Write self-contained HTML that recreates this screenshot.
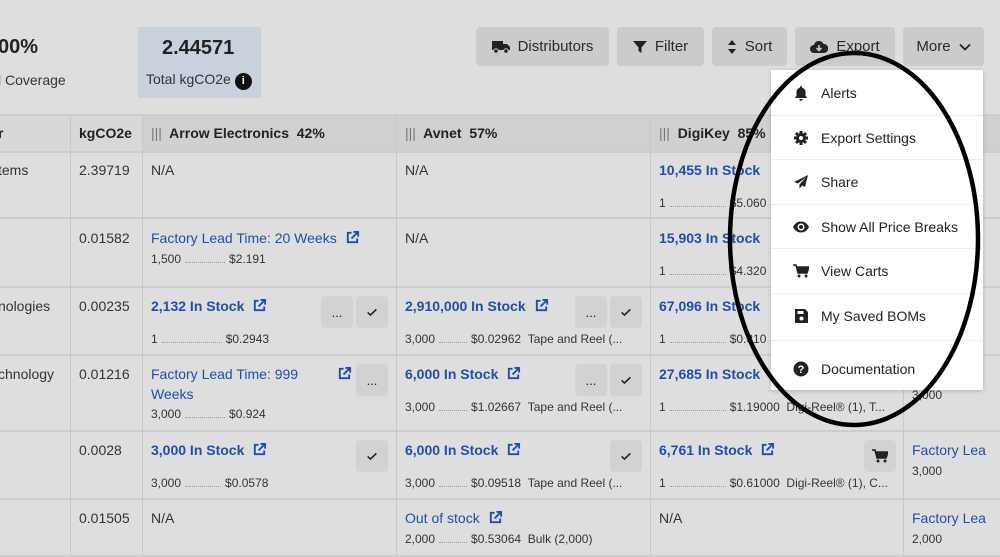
<!DOCTYPE html>
<html><head><meta charset="utf-8"><style>
*{box-sizing:border-box;margin:0;padding:0}
body{width:1000px;height:557px;overflow:hidden;background:#dedede;font-family:"Liberation Sans",sans-serif;color:#222;position:relative}
.a{position:absolute;white-space:nowrap}
.btn{position:absolute;top:27px;height:39px;background:#cbcbcb;border-radius:4px;font-size:15px;color:#2a2a2a;display:flex;align-items:center;justify-content:center;gap:8px}
.vl{position:absolute;width:1px;background:#c8c8c8;top:114px;height:443px}
.hl{position:absolute;left:0;height:2px;background:#cdcdcd;width:1000px}
.t{font-size:14px;color:#333}
.b{font-size:14px;color:#1f4fa8;font-weight:bold}
.l{font-size:14px;color:#1f4fa8}
.s{font-size:12px;color:#333}
.dots{display:inline-block;border-bottom:1px dotted #999;width:48px;margin:0 4px}
.sq{position:absolute;width:32px;height:32px;background:#d2d2d2;border-radius:4px;font-size:13px;display:flex;align-items:center;justify-content:center;color:#222}
.mi{position:absolute;left:793px;font-size:14px;color:#222;display:flex;align-items:center;gap:12px}
.mi svg{width:16px;height:16px}
.sep{position:absolute;left:771px;width:212px;height:1px;background:#eee}
.ext{display:inline-block;vertical-align:-2px;margin-left:4px}
</style></head><body>
<svg width="0" height="0" style="position:absolute"><defs>
<symbol id="ext" viewBox="0 0 16 16"><path d="M7 3H3v10h10V9" fill="none" stroke="#1f4fa8" stroke-width="2"/><path d="M9 2h5v5M14 2L7 9" fill="none" stroke="#1f4fa8" stroke-width="2"/></symbol>
<symbol id="chk" viewBox="0 0 16 16"><path d="M3 8.5l3.2 3L13 5" fill="none" stroke="#222" stroke-width="1.8"/></symbol>
</defs></svg>

<div class="a" style="left:-2px;top:36px;font-size:20px;font-weight:bold">00%</div>
<div class="a t" style="left:-2px;top:72px">l Coverage</div>
<div class="a" style="left:138px;top:27px;width:123px;height:71px;background:#c9d2dc"></div>
<div class="a" style="left:162px;top:37px;font-size:20px;font-weight:bold">2.44571</div>
<div class="a t" style="left:146px;top:71px">Total kgCO2e <span style="display:inline-block;width:17px;height:17px;border-radius:50%;background:#111;color:#fff;font-size:11px;text-align:center;line-height:17px;font-weight:bold">i</span></div>

<div class="btn" style="left:476px;width:133px"><svg width="18" height="14" viewBox="0 0 18 14"><rect x="0" y="1" width="11" height="9" fill="#222"/><path d="M11 4h4l3 3v3h-7z" fill="#222"/><circle cx="4" cy="11" r="2.3" fill="#222" stroke="#cbcbcb" stroke-width="1"/><circle cx="14" cy="11" r="2.3" fill="#222" stroke="#cbcbcb" stroke-width="1"/></svg>Distributors</div>
<div class="btn" style="left:617px;width:87px"><svg width="14" height="14" viewBox="0 0 14 14"><path d="M0 1h14L8.5 7.5V13L5.5 11V7.5z" fill="#222"/></svg>Filter</div>
<div class="btn" style="left:712px;width:75px"><svg width="10" height="16" viewBox="0 0 10 16"><path d="M5 1l4 5H1zM5 15l4-5H1z" fill="#222"/></svg>Sort</div>
<div class="btn" style="left:795px;width:100px"><svg width="18" height="14" viewBox="0 0 18 14"><path d="M4 13a4 4 0 010-8 5 5 0 019.5-1A4.5 4.5 0 0114 13z" fill="#222"/><path d="M9 5v5M6.5 8L9 10.5 11.5 8" fill="none" stroke="#cbcbcb" stroke-width="1.6"/></svg>Export</div>
<div class="btn" style="left:903px;width:81px">More <svg width="12" height="8" viewBox="0 0 12 8"><path d="M1 1.5l5 5 5-5" fill="none" stroke="#222" stroke-width="1.8"/></svg></div>

<div class="a" style="left:0;top:114px;width:1000px;height:37px;background:#d0d0d0"></div>
<div class="a" style="left:0;top:114px;width:142px;height:37px;background:#d8d8d8"></div>
<div class="hl" style="top:114px"></div><div class="hl" style="top:151px"></div>
<div class="hl" style="top:217px"></div><div class="hl" style="top:286px"></div>
<div class="hl" style="top:354px"></div><div class="hl" style="top:430px"></div>
<div class="hl" style="top:498px"></div><div class="hl" style="top:555px"></div>
<div class="vl" style="left:70px"></div><div class="vl" style="left:142px"></div>
<div class="vl" style="left:396px"></div><div class="vl" style="left:650px"></div>
<div class="vl" style="left:903px;top:380px;height:177px"></div>

<div class="a" style="left:-2px;top:125px;font-size:14px;font-weight:bold">r</div>
<div class="a" style="left:79px;top:125px;font-size:14px;font-weight:bold">kgCO2e</div>
<div class="a" style="left:151px;top:125px;font-size:14px;font-weight:bold"><span style="color:#777;font-weight:normal">|||</span>&nbsp; Arrow Electronics &nbsp;42%</div>
<div class="a" style="left:405px;top:125px;font-size:14px;font-weight:bold"><span style="color:#777;font-weight:normal">|||</span>&nbsp; Avnet &nbsp;57%</div>
<div class="a" style="left:659px;top:125px;font-size:14px;font-weight:bold"><span style="color:#777;font-weight:normal">|||</span>&nbsp; DigiKey &nbsp;85%</div>

<div class="a t" style="left:-2px;top:162px">tems</div>
<div class="a t" style="left:-2px;top:298px">nologies</div>
<div class="a t" style="left:-2px;top:366px">chnology</div>
<div class="a t" style="left:79px;top:162px">2.39719</div>
<div class="a t" style="left:79px;top:230px">0.01582</div>
<div class="a t" style="left:79px;top:298px">0.00235</div>
<div class="a t" style="left:79px;top:366px">0.01216</div>
<div class="a t" style="left:79px;top:442px">0.0028</div>
<div class="a t" style="left:79px;top:510px">0.01505</div>

<div class="a t" style="left:151px;top:162px">N/A</div>
<div class="a t" style="left:405px;top:162px">N/A</div>
<div class="a t" style="left:405px;top:230px">N/A</div>
<div class="a t" style="left:151px;top:510px">N/A</div>
<div class="a t" style="left:659px;top:510px">N/A</div>

<div class="a l" style="left:151px;top:230px">Factory Lead Time: 20 Weeks <svg class="ext" width="15" height="15"><use href="#ext"/></svg></div>
<div class="a s" style="left:151px;top:252px">1,500<span class="dots" style="width:40px"></span>$2.191</div>
<div class="a b" style="left:151px;top:298px">2,132 In Stock <svg class="ext" width="15" height="15"><use href="#ext"/></svg></div>
<div class="a s" style="left:151px;top:332px">1<span class="dots" style="width:60px"></span>$0.2943</div>
<div class="sq" style="left:321px;top:296px">...</div><div class="sq" style="left:356px;top:296px"><svg width="14" height="14"><use href="#chk"/></svg></div>
<div class="a l" style="left:151px;top:366px">Factory Lead Time: 999</div>
<div class="a l" style="left:151px;top:386px">Weeks</div>
<div class="a" style="left:337px;top:366px"><svg width="15" height="15"><use href="#ext"/></svg></div>
<div class="a s" style="left:151px;top:407px">3,000<span class="dots" style="width:40px"></span>$0.924</div>
<div class="sq" style="left:356px;top:364px">...</div>
<div class="a b" style="left:151px;top:442px">3,000 In Stock <svg class="ext" width="15" height="15"><use href="#ext"/></svg></div>
<div class="a s" style="left:151px;top:476px">3,000<span class="dots" style="width:36px"></span>$0.0578</div>
<div class="sq" style="left:356px;top:440px"><svg width="14" height="14"><use href="#chk"/></svg></div>

<div class="a b" style="left:405px;top:298px">2,910,000 In Stock <svg class="ext" width="15" height="15"><use href="#ext"/></svg></div>
<div class="a s" style="left:405px;top:332px">3,000<span class="dots" style="width:28px"></span>$0.02962 &nbsp;Tape and Reel (...</div>
<div class="sq" style="left:575px;top:296px">...</div><div class="sq" style="left:610px;top:296px"><svg width="14" height="14"><use href="#chk"/></svg></div>
<div class="a b" style="left:405px;top:366px">6,000 In Stock <svg class="ext" width="15" height="15"><use href="#ext"/></svg></div>
<div class="a s" style="left:405px;top:400px">3,000<span class="dots" style="width:28px"></span>$1.02667 &nbsp;Tape and Reel (...</div>
<div class="sq" style="left:575px;top:364px">...</div><div class="sq" style="left:610px;top:364px"><svg width="14" height="14"><use href="#chk"/></svg></div>
<div class="a b" style="left:405px;top:442px">6,000 In Stock <svg class="ext" width="15" height="15"><use href="#ext"/></svg></div>
<div class="a s" style="left:405px;top:476px">3,000<span class="dots" style="width:28px"></span>$0.09518 &nbsp;Tape and Reel (...</div>
<div class="sq" style="left:610px;top:440px"><svg width="14" height="14"><use href="#chk"/></svg></div>
<div class="a l" style="left:405px;top:510px">Out of stock <svg class="ext" width="15" height="15"><use href="#ext"/></svg></div>
<div class="a s" style="left:405px;top:532px">2,000<span class="dots" style="width:28px"></span>$0.53064 &nbsp;Bulk (2,000)</div>

<div class="a b" style="left:659px;top:162px">10,455 In Stock</div>
<div class="a s" style="left:659px;top:196px">1<span class="dots" style="width:56px"></span>$5.060</div>
<div class="a b" style="left:659px;top:230px">15,903 In Stock</div>
<div class="a s" style="left:659px;top:264px">1<span class="dots" style="width:56px"></span>$4.320</div>
<div class="a b" style="left:659px;top:298px">67,096 In Stock</div>
<div class="a s" style="left:659px;top:332px">1<span class="dots" style="width:56px"></span>$0.310</div>
<div class="a b" style="left:659px;top:366px">27,685 In Stock</div>
<div class="a s" style="left:659px;top:400px">1<span class="dots" style="width:56px"></span>$1.19000 &nbsp;Digi-Reel® (1), T...</div>
<div class="a b" style="left:659px;top:442px">6,761 In Stock <svg class="ext" width="15" height="15"><use href="#ext"/></svg></div>
<div class="a s" style="left:659px;top:476px">1<span class="dots" style="width:56px"></span>$0.61000 &nbsp;Digi-Reel® (1), C...</div>
<div class="sq" style="left:864px;top:440px"><svg width="16" height="14" viewBox="0 0 16 14"><path d="M0 1h3l2 8h9l2-6H4" fill="#222" stroke="#222" stroke-width="1.5"/><circle cx="6" cy="12" r="1.5" fill="#222"/><circle cx="13" cy="12" r="1.5" fill="#222"/></svg></div>
<div class="a l" style="left:912px;top:442px">Factory Lea</div>
<div class="a s" style="left:912px;top:464px">3,000</div>
<div class="a s" style="left:912px;top:388px">3,000</div>
<div class="a l" style="left:912px;top:510px">Factory Lea</div>
<div class="a s" style="left:912px;top:532px">2,000</div>

<div class="a" style="left:771px;top:70px;width:212px;height:320px;background:#fff;box-shadow:0 1px 4px rgba(0,0,0,.2)"></div>
<div class="sep" style="top:115px"></div><div class="sep" style="top:159px"></div>
<div class="sep" style="top:204px"></div><div class="sep" style="top:248px"></div>
<div class="sep" style="top:293px"></div><div class="sep" style="top:340px"></div>
<div class="mi" style="top:85px"><svg viewBox="0 0 16 16"><path d="M8 1a1 1 0 011 1v.6A4.5 4.5 0 0112.5 7v4l1.5 1.5V13H2v-.5L3.5 11V7A4.5 4.5 0 017 2.6V2a1 1 0 011-1zM6.3 14h3.4a1.7 1.7 0 01-3.4 0z" fill="#222"/></svg><span>Alerts</span></div>
<div class="mi" style="top:130px"><svg viewBox="0 0 16 16"><circle cx="8" cy="8" r="5" fill="#222"/><g stroke="#222" stroke-width="3"><path d="M8 1v14M1 8h14M3 3l10 10M13 3L3 13"/></g><circle cx="8" cy="8" r="2" fill="#fff"/></svg><span>Export Settings</span></div>
<div class="mi" style="top:174px"><svg viewBox="0 0 16 16"><path d="M15 1L1 8l4 1.5L13 3 6.5 10.5V15l2.5-3.5 3 1.5z" fill="#222"/></svg><span>Share</span></div>
<div class="mi" style="top:219px"><svg viewBox="0 0 16 16"><path d="M0 8c2-4 5-5.5 8-5.5S14 4 16 8c-2 4-5 5.5-8 5.5S2 12 0 8z" fill="#222"/><circle cx="8" cy="8" r="3.5" fill="#fff"/><circle cx="8" cy="8" r="2" fill="#222"/></svg><span>Show All Price Breaks</span></div>
<div class="mi" style="top:263px"><svg viewBox="0 0 16 14"><path d="M0 1h3l2 8h9l2-6H4" fill="#222" stroke="#222" stroke-width="1.5"/><circle cx="6" cy="12" r="1.5" fill="#222"/><circle cx="13" cy="12" r="1.5" fill="#222"/></svg><span>View Carts</span></div>
<div class="mi" style="top:308px"><svg viewBox="0 0 16 16"><path d="M2 1h10l3 3v11H2z" fill="#222"/><rect x="4.5" y="3" width="6" height="3" fill="#fff"/><circle cx="8.5" cy="10.5" r="2" fill="#fff"/></svg><span>My Saved BOMs</span></div>
<div class="mi" style="top:361px"><svg viewBox="0 0 16 16"><circle cx="8" cy="8" r="7.5" fill="#222"/><text x="8" y="12" font-size="11" font-weight="bold" text-anchor="middle" fill="#fff" font-family="Liberation Sans">?</text></svg><span>Documentation</span></div>

<svg class="a" style="left:0;top:0" width="1000" height="557"><ellipse cx="854" cy="239" rx="124" ry="186" fill="none" stroke="#000" stroke-width="4.5"/></svg>
</body></html>
